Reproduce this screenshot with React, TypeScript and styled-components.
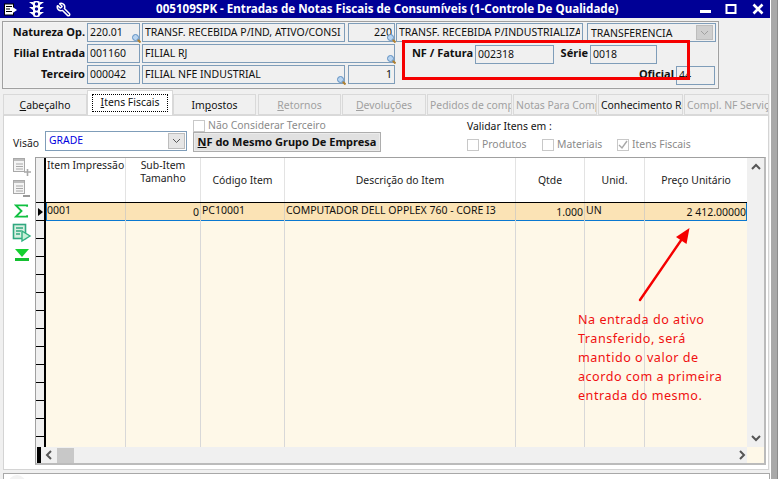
import React from "react";
import styled, { createGlobalStyle } from "styled-components";
import { Wrench } from "lucide-react";

const Global = createGlobalStyle`
  html, body { margin: 0; padding: 0; background: #fff; overflow: hidden; }
  * { box-sizing: border-box; }
`;
const UI = `"Noto Sans", "Liberation Sans", sans-serif`;

const Page = styled.div`
  position: relative; width: 778px; height: 479px; display: flex; overflow: hidden;
  font-family: ${UI}; font-size: 10.4px; color: #000; background: #fff;
`;
const Win = styled.div`width: 770px; height: 479px; display: flex; flex-direction: column; background: #f0f0f0;`;
const Edge = styled.div`width: 7px; height: 479px; background: #a9a9a9; margin-left: 1px; border-right: 1px solid #8c8c8c;`;

const TitleBar = styled.div`
  height: 18px; flex: none; background: #000096; color: #fff; display: flex; align-items: center; padding: 0 0 0 4px;
`;
const TitleIcons = styled.div`display: flex; align-items: center; width: 152px; gap: 12px;`;
const TitleText = styled.div`
  width: 460px; font: bold 11.6px ${UI}; white-space: nowrap; line-height: 18px;
`;
const WinBtns = styled.div`display: flex; align-items: center; margin-left: auto; margin-right: 6px; gap: 11px;`;
const MinBtn = styled.svg`margin-right: 3px;`;
const CloseBtn = styled.svg`margin-left: 4px;`;

const Panel = styled.div`
  margin: 3px 0 0 2px; width: 717px; height: 68px; flex: none; border: 1px solid #a0a0a0; padding: 1px 0 0 0;
  display: flex; flex-direction: column; gap: 2px; box-shadow: inset 0 0 0 1px #f4f4f4;
`;
const Row = styled.div`display: flex; height: 19px;`;
const Label = styled.div<{ $w: number; $ml?: number }>`
  width: ${p => p.$w}px; margin-left: ${p => p.$ml ?? 0}px; flex: none; text-align: right; padding-right: 2px;
  font: bold 11px ${UI}; line-height: 18px; white-space: nowrap; color: #111;
`;
const Field = styled.div<{ $w: number; $ml?: number; $right?: boolean; $top?: number }>`
  position: relative; flex: none; width: ${p => p.$w}px; margin-left: ${p => p.$ml ?? 0}px; margin-top: ${p => p.$top ?? 0}px;
  height: 19px; border: 1px solid #7f9db9; background: #f0f0f0; padding: 0 2px;
  font-size: 10.5px; line-height: 16px; text-align: ${p => (p.$right ? "right" : "left")}; white-space: nowrap; color: #111;
`;
const Clip = styled.div`overflow: hidden; height: 17px;`;
const Glass = styled.svg`position: absolute; right: -2px; bottom: -2px; width: 9px; height: 9px;`;
const ComboBox = styled(Field)`padding-left: 3px; line-height: 18px;`;
const DisabledArrow = styled.div`
  position: absolute; right: 2px; top: 1px; width: 17px; height: 15px; background: #cfcfcf; border: 1px solid #bdbdbd;
  display: flex; align-items: center; justify-content: center;
`;

const Tabs = styled.div`display: flex; align-items: flex-end; height: 25px; flex: none; margin-top: 1px; padding-left: 3px;`;
const Tab = styled.div<{ $active?: boolean; $disabled?: boolean; $w: number; $ml?: number }>`
  width: ${p => p.$w}px; margin-left: ${p => p.$ml ?? 0}px; height: ${p => (p.$active ? 25 : 21)}px; flex: none;
  background: ${p => (p.$active ? "#fff" : "#f0f0f0")};
  border: 1px solid #d9d9d9; border-bottom: ${p => (p.$active ? "none" : "1px solid #d9d9d9")};
  color: ${p => (p.$disabled ? "#a0a0a0" : "#111")};
  text-align: center; line-height: 20px; overflow: hidden; white-space: nowrap; font-size: 10.4px;
  position: relative; z-index: ${p => (p.$active ? 1 : 0)};
  padding: ${p => (p.$active ? "2px 4px" : "0 2px")};
  u { text-underline-offset: 1px; }
`;
const Focus = styled.div`border: 1px dotted #000; height: 18px; line-height: 15px; margin-top: 1px;`;

const Content = styled.div`
  flex: none; height: 355px; margin-left: 3px; width: 766px; background: #fff; border: 1px solid #d4d4d4; border-top: 1px solid #d9d9d9;
  display: flex; flex-direction: column;
`;
const Controls = styled.div`height: 41px; flex: none; display: flex; position: relative;`;
const Vis = styled.div`width: 189px; flex: none; display: flex; align-items: flex-start; padding: 15px 0 0 9px;`;
const VisLabel = styled.div`width: 32px; line-height: 20px; margin-top: 2px; color: #222;`;
const VisCombo = styled.div`
  width: 142px; height: 20px; border: 1px solid #7f9db9; color: #0000e0; line-height: 17px; padding-left: 3px;
  position: relative; background: #fff;
`;
const VisBtn = styled.div`
  position: absolute; right: 1px; top: 1px; bottom: 1px; width: 17px; background: #e6e6e6; border: 1px solid #bdbdbd;
  display: flex; align-items: center; justify-content: center;
`;
const Mid = styled.div`width: 274px; flex: none; display: flex; flex-direction: column; padding-top: 3px;`;
const CheckItem = styled.div<{ $w?: number }>`
  display: flex; align-items: center; gap: 3px; color: #8a8a8a; line-height: 13px; height: 13px; white-space: nowrap;
  width: ${p => (p.$w ? `${p.$w}px` : "auto")}; flex: none;
`;
const Box = styled.div`
  width: 12px; height: 12px; border: 1px solid #c8c8c8; background: #fff; flex: none; display: flex; align-items: center; justify-content: center;
`;
const NfButton = styled.div`
  width: 188px; height: 20px; margin-top: 0; background: #e1e1e1; border: 1px solid #adadad; box-shadow: inset 0 0 0 1px #ececec;
  font: bold 11px ${UI}; line-height: 18px; text-align: center; color: #111; white-space: nowrap;
`;
const Validate = styled.div`padding-top: 3px; display: flex; flex-direction: column;`;
const ValidateTitle = styled.div`line-height: 14px; color: #111; margin-bottom: 5px;`;
const Checks = styled.div`display: flex;`;

const Body = styled.div`flex: 1; display: flex; min-height: 0;`;
const SideTools = styled.div`width: 31px; flex: none; display: flex; flex-direction: column; padding: 0 0 0 8px;`;
const ToolIcon = styled.svg<{ $mt: number; $ml?: number }>`display: block; margin-top: ${p => p.$mt}px; margin-left: ${p => p.$ml ?? 0}px; flex: none;`;

const GridBox = styled.div`
  width: 731px; height: 308px; border: 1px solid #a0a0a0; border-right: 2px solid #bbb; border-bottom: 2px solid #bbb;
  display: flex; flex-direction: column; background: #fff;
`;
const GridMain = styled.div`flex: 1; display: flex; min-height: 0;`;
const Indicator = styled.div`width: 10px; flex: none; background: #f0f0f0; border-right: 2px solid #000; display: flex; flex-direction: column; overflow: hidden;`;
const IndHead = styled.div`height: 45px; flex: none; border-bottom: 1px solid #000; background: #f0f0f0;`;
const IndRow = styled.div<{ $h: number }>`height: ${p => p.$h}px; flex: none; border-bottom: 1px solid #000; position: relative;`;
const Pointer = styled.div`
  position: absolute; left: 2px; top: 5px; width: 0; height: 0; border-left: 5px solid #000; border-top: 4px solid transparent; border-bottom: 4px solid transparent;
`;
const Cols = styled.div`flex: 1; display: flex; flex-direction: column; min-width: 0;`;
const RowLine = styled.div<{ $kind: "head" | "data" | "fill" }>`
  display: grid; grid-template-columns: 80px 75px 84px 231px 69px 60px 103px;
  ${p => p.$kind === "head" && "height: 45px; background: #fff; border-bottom: 1px solid #000; color: #222;"}
  ${p => p.$kind === "data" && "height: 18px; background: #fbe3b5; box-shadow: inset 1px -1px 0 #0a78d0, inset -1px -1px 0 #0a78d0;"}
  ${p => p.$kind === "fill" && "flex: 1; background: #fef8e8;"}
`;
const HeadCell = styled.div<{ $top?: boolean; $left?: boolean }>`
  border-right: 1px solid #e3e3e3; display: flex; padding: 0 1px; line-height: 13px; white-space: pre;
  justify-content: center; text-align: center; align-items: ${p => (p.$top ? "flex-start" : "center")};
  ${p => p.$top && "padding-top: 1px;"}
  ${p => p.$left && "justify-content: flex-start; text-align: left;"}
`;
const DataCell = styled.div<{ $right?: boolean }>`
  border-right: 1px solid #d8d0c0; padding: 0 0 0 1px; white-space: nowrap; overflow: hidden; color: #111; font-size: 10.5px; line-height: 14px;
  ${p => p.$right && "text-align: right; padding: 2px 1px 0 0;"}
`;
const FillCell = styled.div`border-right: 1px solid #d8d8d8;`;
const VScroll = styled.div`
  width: 17px; flex: none; margin-left: 0; background: #f0f0f0; display: flex; flex-direction: column; align-items: center;
  justify-content: space-between; padding: 5px 0;
`;
const HBar = styled.div`height: 16px; flex: none; display: flex; background: #f0f0f0; align-items: center;`;
const BlackStub = styled.div`width: 4px; height: 16px; background: #000; margin-left: 1px; flex: none;`;
const ThumbWrap = styled.div`width: 706px; flex: none; display: flex; align-items: center; padding-left: 4px;`;
const Thumb = styled.div`width: 17px; height: 15px; background: #c8c8c8; margin-left: 4px; flex: none;`;
const Corner = styled.div`width: 17px; height: 16px; background: #fef8e8; flex: none; margin-left: auto;`;
const ArrowEnd = styled.div`margin-left: auto; margin-right: 1px; display: flex;`;

const Footer = styled.div`
  margin: 3px 0 0 3px; width: 767px; flex: 1; background: #fff; border: 1px solid #a8a8a8; border-bottom: none; position: relative; overflow: hidden;
`;
const Bubble = styled.div`position: absolute; left: 4px; top: 1px; width: 18px; height: 18px; border-radius: 50%; background: #f2f2f2;`;

const RedBox = styled.div`
  position: absolute; left: 402px; top: 40px; width: 288px; height: 40px; border: 3px solid #f50000; pointer-events: none;
`;
const ArrowOverlay = styled.svg`position: absolute; left: 630px; top: 222px;`;
const Note = styled.div`
  position: absolute; left: 578px; top: 310px; color: #f01010; font: 12.6px/19px "Noto Sans", sans-serif; white-space: pre-line; letter-spacing: 0.5px;
`;

const Chevron = ({ d }: { d: "up" | "down" | "left" | "right" }) => {
  const pts = { up: "1,6 5,2 9,6", down: "1,2 5,6 9,2", left: "6,1 2,5 6,9", right: "2,1 6,5 2,9" }[d];
  return (
    <svg width={d === "up" || d === "down" ? 10 : 8} height={d === "up" || d === "down" ? 8 : 10}>
      <polyline points={pts} fill="none" stroke="#555" strokeWidth="2" />
    </svg>
  );
};
const Lookup = () => (
  <Glass viewBox="0 0 9 9">
    <line x1="5" y1="5" x2="8.5" y2="8.5" stroke="#b08030" strokeWidth="2" />
    <circle cx="3.5" cy="3.5" r="3" fill="#b8d4f0" stroke="#5f8fc0" />
  </Glass>
);
const Check = ({ on }: { on?: boolean }) => (
  <Box>
    {on && (
      <svg width="10" height="10"><polyline points="1,5 4,8 9,1" fill="none" stroke="#a8a8a8" strokeWidth="1.4" /></svg>
    )}
  </Box>
);
const DocGrey = ({ mt, minus }: { mt: number; minus?: boolean }) => (
  <ToolIcon $mt={mt} width="20" height="20" viewBox="0 0 20 20">
    <rect x="1.5" y="1.5" width="11" height="13" fill="#f4f4f4" stroke="#a8a8a8" />
    <rect x="2" y="2" width="10" height="2" fill="#bdbdbd" />
    <path d="M4 7h7M4 9.5h7M4 12h7" stroke="#a8a8a8" />
    {minus ? <path d="M11 17h7" stroke="#999" strokeWidth="2" /> : <path d="M12 15h7M15.5 12v7" stroke="#a8a8a8" strokeWidth="1.6" />}
  </ToolIcon>
);

const indHeights = Array.from({ length: 13 }, () => 18);

export default function App() {
  return (
    <Page>
      <Global />
      <Win>
        <TitleBar>
          <TitleIcons>
            <svg width="13" height="13" viewBox="0 0 13 13">
              <rect x="0.5" y="1" width="9" height="11" fill="#fff" stroke="#000" />
              <path d="M2 3.5h6M2 6h4M2 8.5h6" stroke="#000" />
              <path d="M8 3.5l5 3.5-5 3.5z" fill="#fff" />
            </svg>
            <svg width="15" height="16" viewBox="0 0 15 16">
              <rect x="4" y="0" width="7" height="16" rx="2" fill="#fff" />
              <path d="M0 1h4v3zM15 1h-4v3zM0 6h4v3zM15 6h-4v3zM0 11h4v3zM15 11h-4v3z" fill="#fff" />
              <circle cx="7.5" cy="3" r="1.7" fill="#000096" />
              <circle cx="7.5" cy="8" r="1.7" fill="#000096" />
              <circle cx="7.5" cy="13" r="1.7" fill="#000096" />
            </svg>
            <Wrench size={15} color="#fff" strokeWidth={2.4} style={{ transform: "scaleX(-1)" }} />
          </TitleIcons>
          <TitleText>005109SPK - Entradas de Notas Fiscais de Consumíveis (1-Controle De Qualidade)</TitleText>
          <WinBtns>
            <MinBtn width="12" height="12"><rect x="1" y="7" width="11" height="3" fill="#fff" /></MinBtn>
            <svg width="12" height="12"><rect x="1.5" y="2" width="9" height="8" fill="none" stroke="#fff" strokeWidth="2" /></svg>
            <CloseBtn width="12" height="12"><path d="M1.5 1.5l9 9M10.5 1.5l-9 9" stroke="#fff" strokeWidth="2.6" /></CloseBtn>
          </WinBtns>
        </TitleBar>

        <Panel>
          <Row>
            <Label $w={84}>Natureza Op.</Label>
            <Field $w={53}><Clip>220.01</Clip><Lookup /></Field>
            <Field $w={203} $ml={2}><Clip>TRANSF. RECEBIDA P/IND, ATIVO/CONSI</Clip></Field>
            <Field $w={47} $ml={3} $right><Clip>220</Clip><Lookup /></Field>
            <Field $w={187} $ml={1}><Clip>TRANSF. RECEBIDA P/INDUSTRIALIZAÇÃO</Clip></Field>
            <ComboBox $w={129} $ml={4}>
              TRANSFERENCIA
              <DisabledArrow>
                <svg width="9" height="6"><polyline points="1,1 4.5,4.5 8,1" fill="none" stroke="#a0a0a0" /></svg>
              </DisabledArrow>
            </ComboBox>
          </Row>
          <Row>
            <Label $w={84}>Filial Entrada</Label>
            <Field $w={53}><Clip>001160</Clip></Field>
            <Field $w={253} $ml={2}><Clip>FILIAL RJ</Clip><Lookup /></Field>
            <Label $w={80}>NF / Fatura</Label>
            <Field $w={79} $top={1}><Clip>002318</Clip></Field>
            <Label $w={36}>Série</Label>
            <Field $w={67} $top={1}><Clip>0018</Clip></Field>
          </Row>
          <Row>
            <Label $w={84}>Terceiro</Label>
            <Field $w={53}><Clip>000042</Clip></Field>
            <Field $w={203} $ml={2}><Clip>FILIAL NFE INDUSTRIAL</Clip><Lookup /></Field>
            <Field $w={47} $ml={3} $right><Clip>1</Clip></Field>
            <Label $w={281}>Oficial</Label>
            <Field $w={39} $top={1}><Clip>44</Clip></Field>
          </Row>
        </Panel>

        <Tabs>
          <Tab $w={84}><u>C</u>abeçalho</Tab>
          <Tab $w={86} $active><Focus><u>I</u>tens Fiscais</Focus></Tab>
          <Tab $w={83}>Im<u>p</u>ostos</Tab>
          <Tab $w={83} $ml={2} $disabled><u>R</u>etornos</Tab>
          <Tab $w={84} $ml={1} $disabled><u>D</u>evoluções</Tab>
          <Tab $w={85} $ml={1} $disabled>Pedidos de comp</Tab>
          <Tab $w={84} $ml={1} $disabled>Notas Para Comp</Tab>
          <Tab $w={85} $ml={1}>Conhecimento Re</Tab>
          <Tab $w={85} $ml={1} $disabled>Compl. NF Serviço</Tab>
        </Tabs>

        <Content>
          <Controls>
            <Vis>
              <VisLabel>Visão</VisLabel>
              <VisCombo>
                GRADE
                <VisBtn>
                  <svg width="9" height="6"><polyline points="1,1 4.5,4.5 8,1" fill="none" stroke="#555" /></svg>
                </VisBtn>
              </VisCombo>
            </Vis>
            <Mid>
              <CheckItem><Check />Não Considerar Terceiro</CheckItem>
              <NfButton><u>N</u>F do Mesmo Grupo De Empresa</NfButton>
            </Mid>
            <Validate>
              <ValidateTitle>Validar Itens em :</ValidateTitle>
              <Checks>
                <CheckItem $w={75}><Check />Produtos</CheckItem>
                <CheckItem $w={75}><Check />Materiais</CheckItem>
                <CheckItem><Check on />Itens Fiscais</CheckItem>
              </Checks>
            </Validate>
          </Controls>
          <Body>
            <SideTools>
              <DocGrey mt={0} />
              <DocGrey mt={2} minus />
              <ToolIcon $mt={5} $ml={2} width="15" height="14" viewBox="0 0 16 15">
                <path d="M14 3V1.5H2L8 7.5 2 13.5H14V12" fill="none" stroke="#10c040" strokeWidth="2" />
              </ToolIcon>
              <ToolIcon $mt={5} width="20" height="20" viewBox="0 0 20 20">
                <rect x="1.5" y="1.5" width="12" height="14" fill="#d8f0e0" stroke="#30a880" strokeWidth="1.6" />
                <path d="M4 5h7M4 8h5M4 11h4" stroke="#30a880" strokeWidth="1.4" />
                <path d="M10 8l8 5-8 5z" fill="#c8f0d8" stroke="#30b080" strokeWidth="1.4" />
              </ToolIcon>
              <ToolIcon $mt={5} $ml={2} width="16" height="14" viewBox="0 0 16 14">
                <path d="M1 1h14L8 9z" fill="#14d030" />
                <rect x="1" y="10" width="14" height="3" fill="#14c030" />
              </ToolIcon>
            </SideTools>
            <GridBox>
              <GridMain>
                <Indicator>
                  <IndHead />
                  <IndRow $h={18}><Pointer /></IndRow>
                  {indHeights.map((h, i) => <IndRow key={i} $h={h} />)}
                </Indicator>
                <Cols>
                  <RowLine $kind="head">
                    <HeadCell $top $left>Item Impressão</HeadCell>
                    <HeadCell $top>{"Sub-Item\nTamanho"}</HeadCell>
                    <HeadCell>Código Item</HeadCell>
                    <HeadCell>Descrição do Item</HeadCell>
                    <HeadCell>Qtde</HeadCell>
                    <HeadCell>Unid.</HeadCell>
                    <HeadCell>Preço Unitário</HeadCell>
                  </RowLine>
                  <RowLine $kind="data">
                    <DataCell>0001</DataCell>
                    <DataCell $right>0</DataCell>
                    <DataCell>PC10001</DataCell>
                    <DataCell>COMPUTADOR DELL OPPLEX 760 - CORE I3</DataCell>
                    <DataCell $right>1.000</DataCell>
                    <DataCell>UN</DataCell>
                    <DataCell $right>2 412.00000</DataCell>
                  </RowLine>
                  <RowLine $kind="fill">
                    {Array.from({ length: 7 }, (_, i) => <FillCell key={i} />)}
                  </RowLine>
                </Cols>
                <VScroll>
                  <Chevron d="up" />
                  <Chevron d="down" />
                </VScroll>
              </GridMain>
              <HBar>
                <BlackStub />
                <ThumbWrap>
                  <Chevron d="left" />
                  <Thumb />
                  <ArrowEnd><Chevron d="right" /></ArrowEnd>
                </ThumbWrap>
                <Corner />
              </HBar>
            </GridBox>
          </Body>
        </Content>

        <Footer><Bubble /></Footer>
      </Win>
      <Edge />

      <RedBox />
      <ArrowOverlay width="70" height="85" viewBox="0 0 70 85">
        <line x1="10" y1="78" x2="54" y2="14" stroke="#f50000" strokeWidth="2.4" strokeLinecap="round" />
        <path d="M59.5 6 L56.5 22 L46 15 Z" fill="#f50000" />
      </ArrowOverlay>
      <Note>{"Na entrada do ativo\nTransferido, será\nmantido o valor de\nacordo com a primeira\nentrada do mesmo."}</Note>
    </Page>
  );
}
